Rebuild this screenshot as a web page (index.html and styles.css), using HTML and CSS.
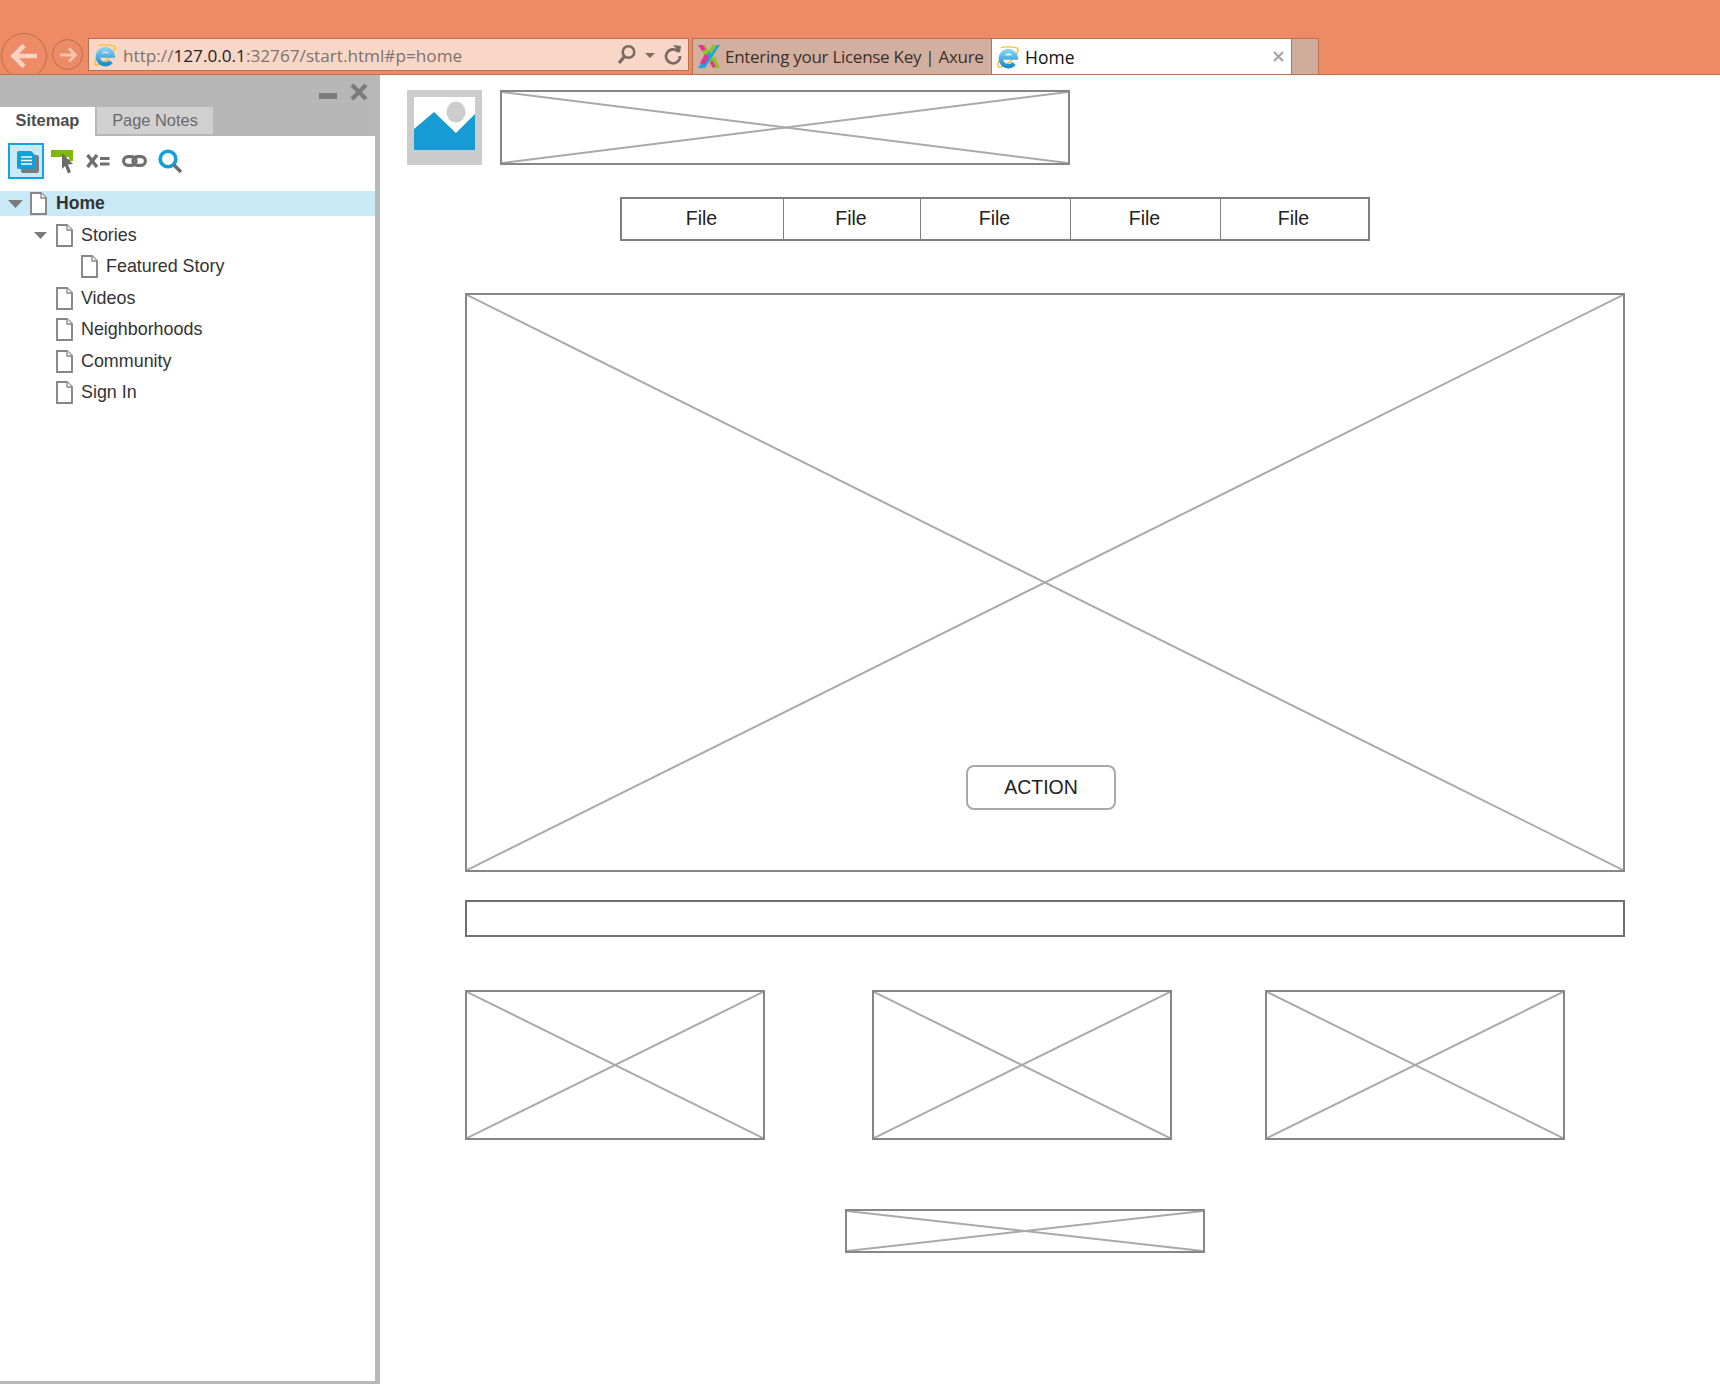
FILE: index.html
```html
<!DOCTYPE html>
<html lang="en">
<head>
    <meta charset="UTF-8">
    <title>Home</title>
    <link rel="stylesheet" href="styles.css">
</head>
<body>
    <svg class="defs" width="0" height="0">
        <defs>
            <linearGradient id="ie-blue" x1="0" y1="0" x2="0" y2="1">
                <stop offset="0" stop-color="#7fd0f2"/>
                <stop offset="1" stop-color="#1b8fd2"/>
            </linearGradient>
            <symbol id="ie" viewBox="0 0 24 24">
                <path d="M21 2.500C23.500 4 20 11 14 16.500C8 22 2 23.500 1 21.500C0.400 20 2 16.500 4 13.500" fill="none" stroke="#f4c430" stroke-width="1.600"/>
                <path d="M4 2.500C6 1 14 1 21 2.500" fill="none" stroke="#f4c430" stroke-width="1.200"/>
                <path d="M6 12.500H19.500A7.800 7.800 0 1 0 17.800 18.800" fill="none" stroke="url(#ie-blue)" stroke-width="4.600"/>
            </symbol>
            <symbol id="doc" viewBox="0 0 17 23">
                <path d="M1 1H11L16 6V22H1Z" fill="#fff" stroke="#868686" stroke-width="1.900"/>
                <path d="M11 1V6H16" fill="#fff" stroke="#868686" stroke-width="1.300"/>
            </symbol>
            <symbol id="twisty" viewBox="0 0 15 8">
                <path d="M0 0H15L7.500 8Z" fill="#7b7b7b"/>
            </symbol>
            <symbol id="cross" viewBox="0 0 100 100" preserveAspectRatio="none">
                <line x1="0" y1="0" x2="100" y2="100" vector-effect="non-scaling-stroke"/>
                <line x1="100" y1="0" x2="0" y2="100" vector-effect="non-scaling-stroke"/>
            </symbol>
        </defs>
    </svg>

    <header class="chrome">
        <div class="nav-back">
            <svg width="28" height="26" viewBox="0 0 28 26"><path d="M14 2.500L3.500 13L14 23.500M4 13H27" fill="none" stroke="#f8d2c2" stroke-width="4.600"/></svg>
        </div>
        <div class="nav-forward">
            <svg width="18" height="16" viewBox="0 0 18 16"><path d="M10 1.500L16.500 8L10 14.500M16 8H1" fill="none" stroke="#f3c4af" stroke-width="3"/></svg>
        </div>
        <div class="address">
            <svg class="address-logo" width="23" height="24"><use href="#ie"/></svg>
            <span class="url">http://<b>127.0.0.1</b>:32767/start.html#p=home</span>
            <svg class="address-tools" width="66" height="22" viewBox="0 0 66 22">
                <circle cx="11.500" cy="8" r="5.800" fill="none" stroke="#7a6a62" stroke-width="2.600"/>
                <path d="M7.500 12.500L2 19" stroke="#7a6a62" stroke-width="3.200"/>
                <path d="M28 9H38L33 14Z" fill="#7a6a62"/>
                <path d="M61.500 8A7 7 0 1 0 63 12" fill="none" stroke="#7a6a62" stroke-width="2.600"/>
                <path d="M56 1L64 2L63 9Z" fill="#7a6a62"/>
            </svg>
        </div>
        <div class="tab tab-first">
            <svg width="24" height="25" viewBox="0 0 24 25">
                <path d="M1 1H8L23 24H16Z" fill="#8cc520"/>
                <path d="M23 1H16L1 24H8Z" fill="#1aa6e0"/>
                <path d="M1 1H6L9 5.500L5 7Z" fill="#ec2f96"/>
                <path d="M16 1H20L14 10L12 7Z" fill="#8cc520"/>
                <path d="M8 10L12 13L7 21L3 19Z" fill="#ec2f96"/>
                <path d="M14 15L18 13L23 24H19Z" fill="#8cc520"/>
                <path d="M15 16L19 22L16 24L13 19Z" fill="#ec2f96"/>
            </svg>
            <span>Entering your License Key | Axure</span>
        </div>
        <div class="tab tab-active">
            <svg width="23" height="24"><use href="#ie"/></svg>
            <span>Home</span>
            <svg class="tab-close" width="11" height="11" viewBox="0 0 11 11"><path d="M1 1L10 10M10 1L1 10" stroke="#a5a5a5" stroke-width="2.200"/></svg>
        </div>
        <div class="tab-new"></div>
    </header>

    <div class="workspace">
        <aside class="panel">
            <div class="panel-head">
                <div class="panel-controls">
                    <span class="panel-min"></span>
                    <svg width="18" height="18" viewBox="0 0 18 18"><path d="M2 2L16 16M16 2L2 16" stroke="#7b7b7b" stroke-width="4.200"/></svg>
                </div>
                <div class="panel-tabs">
                    <div class="panel-tab panel-tab-on">Sitemap</div>
                    <div class="panel-tab">Page Notes</div>
                </div>
            </div>
            <div class="tools">
                <div class="tool-on">
                    <svg width="24" height="24" viewBox="0 0 24 24">
                        <rect x="5" y="5" width="18" height="18" rx="2" fill="#7c7c7c"/>
                        <path d="M3 1H15L20 6V17A2 2 0 0 1 18 19H3A2 2 0 0 1 1 17V3A2 2 0 0 1 3 1Z" fill="#119fdc"/>
                        <path d="M5 7H16M5 10.500H16M5 14H16" stroke="#fff" stroke-width="1.600"/>
                    </svg>
                </div>
                <svg width="24" height="25" viewBox="0 0 24 25">
                    <path d="M1 1H23V12H19V8H11V8H1Z" fill="#7fba00"/>
                    <path d="M12 4L23 15L18 15.500L21 23L18 24.500L15 17L12 20Z" fill="#6b6b6b"/>
                </svg>
                <svg width="24" height="14" viewBox="0 0 24 14">
                    <path d="M1.500 1L11 13M11 1L1.500 13" stroke="#6f6f6f" stroke-width="3.400"/>
                    <path d="M14 4.500H23.500M14 10H23.500" stroke="#6f6f6f" stroke-width="3"/>
                </svg>
                <svg width="25" height="12" viewBox="0 0 25 12">
                    <rect x="1.600" y="1.600" width="12.500" height="8.800" rx="4.400" fill="none" stroke="#6f6f6f" stroke-width="3.200"/>
                    <rect x="10.900" y="1.600" width="12.500" height="8.800" rx="4.400" fill="none" stroke="#6f6f6f" stroke-width="3.200"/>
                </svg>
                <svg class="tool-search" width="25" height="24" viewBox="0 0 25 24">
                    <circle cx="10" cy="10" r="7.800" fill="none" stroke="#119fdc" stroke-width="3.600"/>
                    <path d="M15.500 15.500L23 23" stroke="#6f6f6f" stroke-width="3.600"/>
                </svg>
            </div>
            <nav class="tree">
                <div class="node node-current">
                    <svg class="twisty" width="15" height="8"><use href="#twisty"/></svg>
                    <svg class="doc" width="17" height="23"><use href="#doc"/></svg>
                    <span>Home</span>
                </div>
                <div class="node level-1">
                    <svg class="twisty twisty-small" width="13" height="7"><use href="#twisty"/></svg>
                    <svg class="doc" width="17" height="23"><use href="#doc"/></svg>
                    <span>Stories</span>
                </div>
                <div class="node level-2">
                    <span class="twisty"></span>
                    <svg class="doc" width="17" height="23"><use href="#doc"/></svg>
                    <span>Featured Story</span>
                </div>
                <div class="node level-1">
                    <span class="twisty"></span>
                    <svg class="doc" width="17" height="23"><use href="#doc"/></svg>
                    <span>Videos</span>
                </div>
                <div class="node level-1">
                    <span class="twisty"></span>
                    <svg class="doc" width="17" height="23"><use href="#doc"/></svg>
                    <span>Neighborhoods</span>
                </div>
                <div class="node level-1">
                    <span class="twisty"></span>
                    <svg class="doc" width="17" height="23"><use href="#doc"/></svg>
                    <span>Community</span>
                </div>
                <div class="node level-1">
                    <span class="twisty"></span>
                    <svg class="doc" width="17" height="23"><use href="#doc"/></svg>
                    <span>Sign In</span>
                </div>
            </nav>
        </aside>

        <main class="canvas">
            <div class="head-row">
                <div class="logo">
                    <svg width="61" height="60" viewBox="0 0 61 60">
                        <rect width="61" height="53" fill="#fff"/>
                        <ellipse cx="42" cy="15" rx="9.500" ry="10.500" fill="#ccc"/>
                        <path d="M0 32L20 15L42 36L61 17V53H0Z" fill="#169bd5"/>
                    </svg>
                </div>
                <div class="box banner"><svg class="cross"><use href="#cross"/></svg></div>
            </div>

            <div class="menu">
                <div class="menu-item">File</div>
                <div class="menu-item">File</div>
                <div class="menu-item">File</div>
                <div class="menu-item">File</div>
                <div class="menu-item">File</div>
            </div>

            <div class="box hero">
                <svg class="cross"><use href="#cross"/></svg>
                <button class="action">ACTION</button>
            </div>

            <div class="bar"></div>

            <div class="cards">
                <div class="box card"><svg class="cross"><use href="#cross"/></svg></div>
                <div class="box card card-mid"><svg class="cross"><use href="#cross"/></svg></div>
                <div class="box card"><svg class="cross"><use href="#cross"/></svg></div>
            </div>

            <div class="box footer-box"><svg class="cross"><use href="#cross"/></svg></div>
        </main>
    </div>
</body>
</html>
```

FILE: styles.css
```css
* {
    box-sizing: border-box;
}

body {
    margin: 0;
    width: 1720px;
    height: 1384px;
    overflow: hidden;
    background-color: #fff;
    font-family: "Liberation Sans", Arial, sans-serif;
    display: flex;
    flex-direction: column;
}

.defs {
    position: absolute;
}

/* browser chrome */
.chrome {
    height: 75px;
    flex: none;
    display: flex;
    align-items: flex-start;
    padding-top: 38px;
    background-color: #ec8b65;
    border-bottom: 1px solid #bd6f50;
    overflow: hidden;
    font-family: "Open Sans", sans-serif;
}

.chrome svg {
    flex: none;
}

.nav-back {
    width: 46px;
    height: 46px;
    margin: -5px 0 0 1px;
    flex: none;
    border: 1px solid #b9704f;
    border-radius: 50%;
    display: flex;
    align-items: center;
    justify-content: center;
}

.nav-forward {
    width: 31px;
    height: 31px;
    margin: 1px 0 0 5px;
    flex: none;
    border: 1px solid #b9704f;
    border-radius: 50%;
    display: flex;
    align-items: center;
    justify-content: center;
}

.address {
    width: 601px;
    height: 33px;
    margin-left: 5px;
    flex: none;
    display: flex;
    align-items: center;
    padding: 0 5px;
    background-color: #f8d7c9;
    border: 1px solid #b9704f;
}

.url {
    margin: 2px 0 0 6px;
    font-size: 17.200px;
    color: #7d716b;
    white-space: nowrap;
}

.url b {
    font-weight: 400;
    color: #222;
}

.address-tools {
    margin-left: auto;
}

.tab {
    width: 300px;
    height: 36px;
    flex: none;
    display: flex;
    align-items: center;
    gap: 5px;
    padding: 0 0 0 5px;
    background-color: #d3af9f;
    border: 1px solid #b9704f;
    border-bottom: none;
    font-size: 17.500px;
    color: #3a302c;
    white-space: nowrap;
}

.tab-first {
    margin-left: 3px;
    padding-left: 4px;
    gap: 4px;
    font-size: 17px;
    letter-spacing: -0.280px;
}

.tab-active {
    background-color: #fff;
    color: #111;
    border-left: none;
}

.tab-close {
    margin: 0 7px 0 auto;
}

.tab-new {
    width: 27px;
    height: 36px;
    flex: none;
    background-color: #cfac9c;
    border: 1px solid #b9704f;
    border-left: none;
    border-bottom: none;
}

.workspace {
    flex: 1;
    display: flex;
    min-height: 0;
}

/* sitemap panel */
.panel {
    width: 380px;
    height: 1309px;
    flex: none;
    background-color: #fff;
    border-right: 5px solid #b8b8b8;
    border-bottom: 3px solid #b8b8b8;
}

.panel-head {
    height: 61px;
    display: flex;
    flex-direction: column;
    justify-content: space-between;
    background-color: #b7b7b7;
}

.panel-controls {
    display: flex;
    align-items: center;
    justify-content: flex-end;
    gap: 12px;
    padding: 8px 7px 0 0;
}

.panel-min {
    width: 18px;
    height: 6px;
    margin: 8px 1px 0 0;
    background-color: #7b7b7b;
}

.panel-tabs {
    display: flex;
    gap: 2px;
    align-items: flex-start;
}

.panel-tab {
    width: 116px;
    height: 27px;
    line-height: 27px;
    text-align: center;
    font-size: 16.400px;
    color: #6a6a6a;
    background-color: #d0d0d0;
}

.panel-tab-on {
    width: 95px;
    height: 29px;
    font-weight: bold;
    color: #4d4d4d;
    background-color: #fff;
}

.tools {
    height: 55px;
    display: flex;
    align-items: center;
    gap: 12px;
    padding: 7px 0 12px 8px;
}

.tool-on {
    width: 36px;
    height: 36px;
    margin-right: -6px;
    padding: 5px 0 0 6px;
    border: 2px solid #0ea5e0;
    background-color: #c9e9f7;
}

.tool-on svg {
    display: block;
}

.tool-search {
    margin-left: -1px;
}

.tree {
    display: flex;
    flex-direction: column;
    gap: 6.500px;
}

.node {
    height: 25px;
    display: flex;
    align-items: center;
    padding-left: 8px;
    font-size: 17.900px;
    color: #333;
}

.node-current {
    background-color: #cae9f7;
    font-weight: bold;
    font-size: 17.600px;
}

.level-1 {
    padding-left: 34px;
}

.level-2 {
    padding-left: 59px;
}

.twisty {
    width: 22px;
    flex: none;
    padding-right: 7px;
}

.twisty-small {
    width: 13px;
    margin-right: 9px;
    padding-right: 0;
}

.doc {
    flex: none;
    margin-right: 8px;
}

.node-current .doc {
    margin-right: 9px;
}

/* wireframe canvas */
.canvas {
    flex: 1;
    min-width: 0;
}

.box {
    position: relative;
    border: 2px solid #868686;
    background-color: #fff;
}

.cross {
    display: block;
    width: 100%;
    height: 100%;
    fill: none;
    stroke: #a9a9a9;
    stroke-width: 2px;
}

.head-row {
    display: flex;
    gap: 18px;
    margin: 15px 0 0 27px;
}

.logo {
    width: 75px;
    height: 75px;
    padding: 7px;
    background-color: #ccc;
}

.logo svg {
    display: block;
}

.banner {
    width: 570px;
    height: 75px;
}

.menu {
    width: 750px;
    height: 44px;
    margin: 32px 0 0 240px;
    display: grid;
    grid-template-columns: 161px 137px 150px 150px 1fr;
    border: 2px solid #7f7f7f;
}

.menu-item {
    display: flex;
    align-items: center;
    justify-content: center;
    padding: 0 2px 2px 0;
    font-size: 19.500px;
    color: #222;
    border-left: 1px solid #7f7f7f;
}

.menu-item:first-child {
    border-left: none;
}

.hero {
    width: 1160px;
    height: 579px;
    margin: 52px 0 0 85px;
}

.action {
    position: absolute;
    left: 499px;
    top: 470px;
    width: 150px;
    height: 45px;
    font-family: "Liberation Sans", Arial, sans-serif;
    font-size: 19.500px;
    color: #222;
    background-color: #fff;
    border: 2px solid #a9a9a9;
    border-radius: 8px;
}

.bar {
    width: 1160px;
    height: 37px;
    margin: 28px 0 0 85px;
    border: 2px solid #707070;
}

.cards {
    display: flex;
    margin: 53px 0 0 85px;
}

.card {
    width: 300px;
    height: 150px;
}

.card-mid {
    margin: 0 93px 0 107px;
}

.footer-box {
    width: 360px;
    height: 44px;
    margin: 69px 0 0 465px;
}
```
